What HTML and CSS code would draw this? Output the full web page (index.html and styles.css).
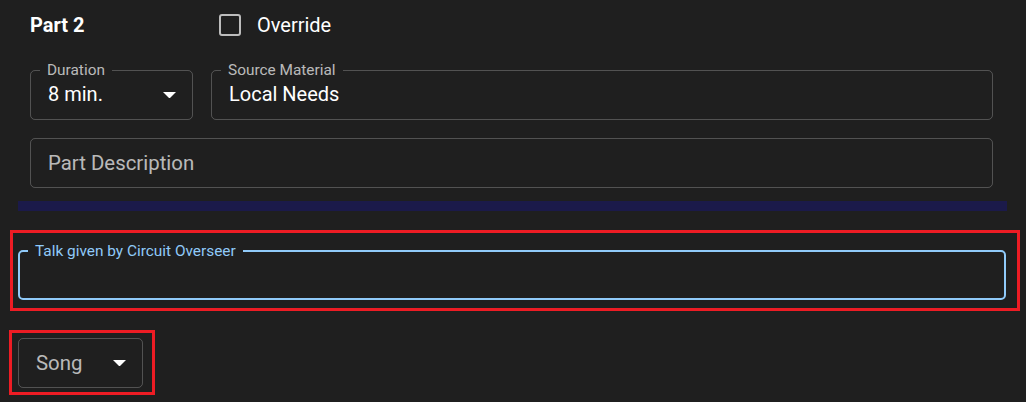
FILE: index.html
```html
<!DOCTYPE html>
<html lang="en">
<head>
<meta charset="utf-8">
<title>Part 2</title>
<link rel="stylesheet" href="styles.css">
</head>
<body>
<main class="page">
  <section class="part">
    <div class="part-head">
      <span class="part-title">Part 2</span>
      <label class="check">
        <span class="check-box"></span>
        <span class="check-text">Override</span>
      </label>
    </div>
    <div class="row">
      <div class="field field-duration">
        <span class="field-label">Duration</span>
        <span class="field-value">8 min.</span>
        <svg class="arrow" viewBox="0 0 10 5" aria-hidden="true"><path d="M0 0l5 5 5-5z"/></svg>
      </div>
      <div class="field field-grow">
        <span class="field-label">Source Material</span>
        <span class="field-value">Local Needs</span>
      </div>
    </div>
    <div class="field field-desc">
      <span class="field-placeholder">Part Description</span>
    </div>
  </section>
  <div class="divider"></div>
  <div class="highlight highlight-wide">
    <div class="field field-focused">
      <span class="field-label field-label-focused">Talk given by Circuit Overseer</span>
    </div>
  </div>
  <div class="highlight highlight-song">
    <div class="field field-song">
      <span class="field-placeholder">Song</span>
      <svg class="arrow" viewBox="0 0 10 5" aria-hidden="true"><path d="M0 0l5 5 5-5z"/></svg>
    </div>
  </div>
</main>
</body>
</html>
```

FILE: styles.css
```css
* { box-sizing: border-box; }

html, body {
  margin: 0;
  background: #1f1f1f;
}

body {
  font-family: Roboto, "Liberation Sans", Arial, sans-serif;
  color: #ffffff;
  min-height: 402px;
}

.page {
  width: 1026px;
  padding: 10px 19px 7px 18px;
}

.part {
  padding: 0 14px 0 12px;
}

.part-head {
  display: flex;
  align-items: center;
  height: 30px;
}

.part-title {
  width: 189px;
  font-size: 20px;
  font-weight: 700;
}

.check {
  display: flex;
  align-items: center;
  gap: 16px;
}

.check-box {
  width: 22px;
  height: 22px;
  border: 2.5px solid rgba(255, 255, 255, 0.7);
  border-radius: 3px;
}

.check-text {
  font-size: 20px;
}

.row {
  display: flex;
  gap: 18px;
  margin-top: 30px;
}

.field {
  position: relative;
  display: flex;
  align-items: center;
  height: 50px;
  padding: 0 16px 0 17px;
  border: 1px solid rgba(255, 255, 255, 0.23);
  border-radius: 5px;
  font-size: 20px;
}

.field-duration { width: 163px; }
.field-grow { flex: 1; }
.field-desc { margin-top: 18px; }

.field-value {
  color: #ffffff;
  padding-bottom: 2px;
}

.field-placeholder {
  color: rgba(255, 255, 255, 0.7);
  font-size: 20.4px;
}

.field-label {
  position: absolute;
  top: -8px;
  left: 9px;
  padding: 0 7px;
  background: #1f1f1f;
  font-size: 15.4px;
  line-height: 15px;
  color: rgba(255, 255, 255, 0.7);
}

.arrow {
  width: 13px;
  height: 6.5px;
  margin-left: auto;
  fill: #ffffff;
}

.divider {
  height: 10px;
  margin-top: 13px;
  background: #1b1a4a;
}

.highlight {
  outline: 3px solid #ed1c24;
}

.highlight-wide {
  margin: 22px -10px 0 -5px;
  padding: 17px 11px 8px 5px;
}

.field-focused {
  border: 2px solid #90caf9;
}

.field-label-focused {
  left: 8px;
  color: #90caf9;
}

.highlight-song {
  width: fit-content;
  margin: 25px 0 0 -6px;
  padding: 5px 9px 4px 6px;
}

.field-song {
  width: 125px;
}
```
